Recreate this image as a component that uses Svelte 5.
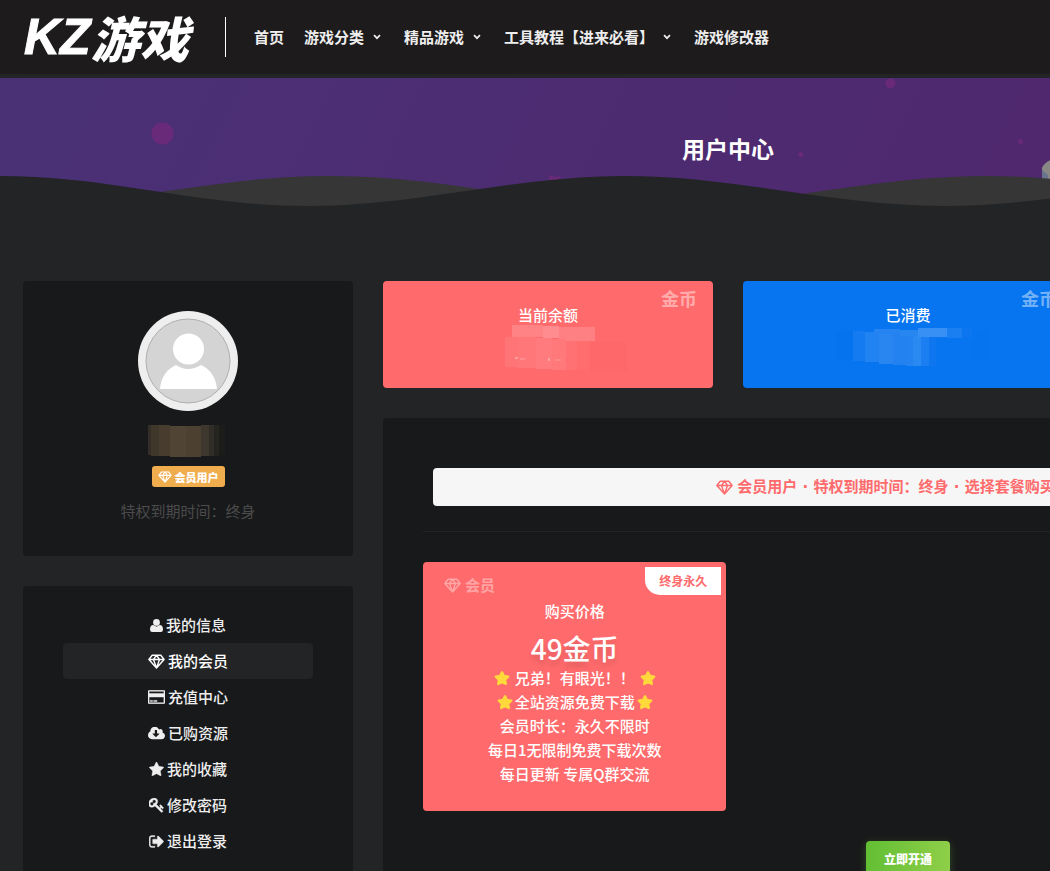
<script>
  const icons = {
    user: { box: '0 0 13 13', w: 13, h: 13, d: 'M6.5 0a3.4 3.4 0 0 1 0 6.8a3.4 3.4 0 0 1 0-6.8zM0 10.5C0 8 1 6 3.3 6Q4.8 7.4 6.5 7.4T9.7 6C12 6 13 8 13 10.5Q13 13 10.8 13H2.2Q0 13 0 10.5z' },
    diamond: { box: '0 0 17 15', w: 17, h: 15, line: 1.4, d: 'M4.2 1.2h8.6l3.3 4.3L8.500 14L.9 5.500zM.9 5.500h15.200M8.500 1.200L5.500 5.500L8.500 14L11.500 5.500z' },
    card: { box: '0 128 1920 1536', w: 17, h: 14, edge: 50, d: 'M1760 128q66 0 113 47t47 113v1216q0 66-47 113t-113 47h-1600q-66 0-113-47t-47-113v-1216q0-66 47-113t113-47h1600zm-1600 128q-13 0-22.5 9.5t-9.5 22.5v224h1664v-224q0-13-9.5-22.5t-22.5-9.5h-1600zm1600 1280q13 0 22.5-9.5t9.5-22.5v-608h-1664v608q0 13 9.5 22.5t22.5 9.5h1600zm-1504-128v-128h256v128h-256zm384 0v-128h384v128h-384z' },
    cloud: { box: '-64 192 1920 1408', w: 17, h: 13, d: 'M1216 928q0-14-9-23t-23-9h-224v-352q0-13-9.5-22.5t-22.5-9.5h-192q-13 0-22.5 9.5t-9.5 22.5v352h-224q-13 0-22.5 9.5t-9.5 22.5q0 14 9 23l352 352q9 9 23 9t23-9l351-351q10-12 10-24zm640 224q0 159-112.5 271.5t-271.5 112.5h-1088q-185 0-316.5-131.5t-131.5-316.5q0-130 70-240t188-165q-2-30-2-43 0-212 150-362t362-150q156 0 285.5 87t188.5 231q71-62 166-62 106 0 181 75t75 181q0 76-41 138 130 31 213.5 135.5t83.5 238.5z' },
    star: { box: '64 32 1664 1600', w: 15, h: 14, edge: 40, d: 'M1728 647q0 22-26 48l-363 354 86 500q1 7 1 20 0 21-10.5 35.5t-30.5 14.5q-19 0-40-12l-449-236-449 236q-22 12-40 12-21 0-31.5-14.5t-10.5-35.5q0-6 2-20l86-500-364-354q-25-27-25-48 0-37 56-46l502-73 225-455q19-41 49-41t49 41l225 455 502 73q56 9 56 46z' },
    key: { box: '64 128 1664 1664', w: 15, h: 15, edge: 50, d: 'M832 512q0-80-56-136t-136-56-136 56-56 136q0 42 19 83-41-19-83-19-80 0-136 56t-56 136 56 136 136 56 136-56 56-136q0-42-19-83 41 19 83 19 80 0 136-56t56-136zm851 704q0 17-49 66t-66 49q-9 0-28.5-16t-36.5-33-38.5-40-24.5-26l-96 96 220 220q28 28 28 68 0 42-39 81t-81 39q-40 0-68-28l-671-671q-176 131-365 131-163 0-265.5-102.5t-102.5-265.5q0-160 95-313t248-248 313-95q163 0 265.5 102.5t102.5 265.5q0 189-131 365l355 355 96-96q-3-3-26-24.5t-40-38.5-33-36.5-16-28.5q0-17 49-66t66-49q13 0 23 10 6 6 46 44.5t82 79.5 86.5 86 73 78 28.5 41z' },
    exit: { box: '64 192 1600 1408', w: 15, h: 13, edge: 40, d: 'M704 1440q0 4 1 20t.5 26.5-3 23.5-10 19.5-20.5 6.5h-320q-119 0-203.5-84.5t-84.5-203.5v-704q0-119 84.5-203.5t203.5-84.5h320q13 0 22.5 9.5t9.5 22.5q0 4 1 20t.5 26.5-3 23.5-10 19.5-20.5 6.5h-320q-66 0-113 47t-47 113v704q0 66 47 113t113 47h312l11.5 1 11.5 3 8 5.5 7 9 2 13.5zm928-544q0 26-19 45l-544 544q-19 19-45 19t-45-19-19-45v-288h-448q-26 0-45-19t-19-45v-384q0-26 19-45t45-19h448v-288q0-26 19-45t45-19 45 19l544 544q19 19 19 45z' }
  };

  const nav = [
    { label: '首页' },
    { label: '游戏分类', sub: true },
    { label: '精品游戏', sub: true },
    { label: '工具教程【进来必看】', sub: true },
    { label: '游戏修改器' }
  ];

  const menu = [
    { icon: 'user', label: '我的信息' },
    { icon: 'diamond', label: '我的会员', active: true },
    { icon: 'card', label: '充值中心' },
    { icon: 'cloud', label: '已购资源' },
    { icon: 'star', label: '我的收藏' },
    { icon: 'key', label: '修改密码' },
    { icon: 'exit', label: '退出登录' }
  ];

  // Mosaic tiles: x, y, width, height, fill
  const nameTiles = [
    [0, 0, 3, 30, '#352e28'], [3, 0, 8, 31, '#40372b'], [11, 0, 11, 31, '#473c2e'],
    [22, 1, 16, 31, '#504434'], [38, 1, 15, 31, '#4c4031'], [53, 0, 8, 31, '#3e372e'],
    [61, 0, 5, 31, '#302c27'], [66, 0, 5, 31, '#26241f'], [71, 0, 6, 30, '#1c1c1a']
  ];
  const balanceTiles = [
    [7, 0, 31, 12, '#ff8284'], [38, 1, 16, 12, '#ff8c8f'], [54, 2, 36, 14, '#ff8083'],
    [0, 12, 13, 30, '#ff7476'], [13, 12, 18, 31, '#ff7779'], [31, 13, 16, 31, '#ff7b7d'],
    [47, 14, 14, 31, '#ff797b'], [61, 16, 11, 29, '#ff7173'], [72, 16, 13, 29, '#ff6d6f'],
    [85, 17, 37, 29, '#ff686b'],
    [10, 32, 3, 2, '#ff9c9e'], [15, 33, 5, 2, '#ff8c8f'], [43, 33, 2, 3, '#ffa0a2'], [50, 34, 6, 2, '#ff898b']
  ];
  const spentTiles = [
    [0, 6, 17, 29, '#0573ee'], [17, 6, 12, 30, '#147bf1'], [29, 7, 14, 30, '#2183f1'],
    [38, 4, 26, 6, '#2584f1'], [43, 9, 14, 30, '#2986f1'], [57, 10, 13, 30, '#2382f0'],
    [70, 10, 7, 31, '#2483f1'], [77, 10, 8, 31, '#2b89f2'], [85, 11, 8, 30, '#1c7ff1'],
    [93, 11, 7, 30, '#0e77ef'], [64, 5, 18, 6, '#2886f1'], [82, 3, 29, 9, '#3990f4'],
    [111, 3, 15, 10, '#1a80f2'], [126, 3, 10, 10, '#0b76ef'], [136, 6, 17, 28, '#0674ef']
  ];
</script>

{#snippet icon(name)}
  {@const i = icons[name]}
  <svg class="icon" width={i.w} height={i.h} viewBox={i.box} aria-hidden="true">
    {#if i.line}
      <path d={i.d} fill="none" stroke="currentColor" stroke-width={i.line} stroke-linejoin="round" />
    {:else}
      <path d={i.d} fill="currentColor" stroke="currentColor" stroke-width={i.edge ?? 0} />
    {/if}
  </svg>
{/snippet}

{#snippet mosaic(tiles, w, h)}
  <svg class="mosaic" width={w} height={h} viewBox="0 0 {w} {h}" shape-rendering="crispEdges" aria-hidden="true">
    {#each tiles as [x, y, tw, th, fill]}
      <rect {x} {y} width={tw} height={th} {fill} />
    {/each}
  </svg>
{/snippet}

{#snippet goldStar()}
  <svg class="gold" width="16" height="16" viewBox="0 0 16 16" aria-hidden="true">
    <path d="M8 2.200l1.900 3.800 4.300.6-3.100 3 .7 4.300L8 12l-3.800 1.900.7-4.300-3.100-3 4.300-.6z" fill="#ffd83b" stroke="#ffd83b" stroke-width="2.400" stroke-linejoin="round" />
  </svg>
{/snippet}

<div class="page">
  <header>
    <a class="logo" href="#home"><span>KZ</span>游戏</a>
    <nav>
      {#each nav as item}
        <a href="#nav">
          {item.label}
          {#if item.sub}
            <svg class="chev" width="8" height="6" viewBox="0 0 8 6" aria-hidden="true"><path d="M1 1.200l3 3 3-3" fill="none" stroke="currentColor" stroke-width="1.700" /></svg>
          {/if}
        </a>
      {/each}
    </nav>
  </header>

  <section class="hero">
    <svg class="scene" width="1456" height="128" viewBox="0 0 1456 128" aria-hidden="true">
      <g fill="#6a2a7a">
        <circle cx="162.500" cy="55.500" r="11" />
        <circle cx="890.500" cy="5.500" r="5" />
        <circle cx="801" cy="76.500" r="2.500" />
        <circle cx="1020.500" cy="63.500" r="2.500" />
        <path d="M549 97l6 2 6-1-4 6h-8z" />
      </g>
      <path d="M1042 90q3-7 12-9v22h-12z" fill="#888887" />
      <path d="M1042 92l6 5v8h-6z" fill="#68738e" />
      <path d="M4 128C122 128 212 98 330 98S540 128 658 128S869 98 987 98S1197 128 1315 128z" fill="#363636" />
      <path d="M0 98C112 98 196 128 308 128S513 98 625 98S833 128 945 128S1153 98 1265 98S1400 110 1456 120V128H0z" fill="#232426" />
    </svg>
    <h1>用户中心</h1>
  </section>

  <main>
    <aside>
      <section class="panel profile">
        <svg class="avatar" width="100" height="100" viewBox="0 0 100 100" role="img" aria-label="头像">
          <circle cx="50" cy="50" r="50" fill="#eee" />
          <circle cx="50" cy="50" r="42" fill="#d4d4d4" stroke="#999" stroke-width=".7" />
          <circle cx="50.500" cy="38" r="15.500" fill="#fff" />
          <path d="M22 78C23 66 29 58 38 54Q50 62 63 54C72 58 78 66 79 78z" fill="#fff" />
        </svg>
        {@render mosaic(nameTiles, 80, 32)}
        <span class="badge">{@render icon('diamond')}会员用户</span>
        <p>特权到期时间：终身</p>
      </section>

      <nav class="panel menu">
        {#each menu as item}
          <a href="#menu" class:active={item.active}>{@render icon(item.icon)}{item.label}</a>
        {/each}
      </nav>
    </aside>

    <div class="content">
      <div class="stats">
        <section class="stat red">
          <span class="unit">金币</span>
          <h2>当前余额</h2>
          {@render mosaic(balanceTiles, 122, 46)}
        </section>
        <section class="stat blue">
          <span class="unit">金币</span>
          <h2>已消费</h2>
          {@render mosaic(spentTiles, 153, 46)}
        </section>
      </div>

      <section class="panel plans">
        <div class="notice">{@render icon('diamond')}会员用户 · 特权到期时间：终身 · 选择套餐购买或续费</div>
        <hr />
        <div class="grid">
          <article class="plan">
            <span class="tier">{@render icon('diamond')}会员</span>
            <span class="term">终身永久</span>
            <h3>购买价格</h3>
            <strong>49金币</strong>
            <ul>
              <li class="wide">{@render goldStar()}<span>兄弟！有眼光！！</span>{@render goldStar()}</li>
              <li>{@render goldStar()}<span>全站资源免费下载</span>{@render goldStar()}</li>
              <li>会员时长：永久不限时</li>
              <li>每日1无限制免费下载次数</li>
              <li>每日更新 专属Q群交流</li>
            </ul>
          </article>
        </div>
        <button type="button">立即开通</button>
      </section>
    </div>
  </main>
</div>

<style>
  :global(body) {
    margin: 0;
    background: #232426;
    overflow-x: hidden;
  }
  .page {
    min-width: 1456px;
    font-family: "Noto Sans CJK SC", sans-serif;
    font-size: 15px;
    line-height: 24px;
    color: #fff;
  }
  a { color: inherit; text-decoration: none; }
  h1, h2, h3, p, ul { margin: 0; padding: 0; }
  svg { display: block; flex: none; }

  header {
    display: flex;
    align-items: center;
    box-sizing: border-box;
    height: 78px;
    padding: 0 24px;
    background: #1d1b1c;
    border-bottom: 4px solid #232426;
  }
  .logo {
    display: flex;
    align-items: center;
    width: 201px;
    height: 40px;
    border-right: 1px solid #fff;
    font-size: 49px;
    line-height: 36px;
    font-weight: 900;
    font-style: italic;
    white-space: nowrap;
  }
  .logo span {
    font-family: "Liberation Sans", sans-serif;
    font-size: 50px;
    line-height: 40px;
    font-weight: 700;
    -webkit-text-stroke: 1px #fff;
  }
  header nav {
    display: flex;
    padding-left: 18px;
    font-weight: 700;
    color: #eee;
  }
  header nav a {
    display: flex;
    align-items: center;
    padding: 0 10px;
  }
  .chev { margin: 0 3px 0 9px; }

  .hero {
    position: relative;
    display: flex;
    justify-content: center;
    height: 128px;
    background: linear-gradient(115deg, #4a3176, #4f286e 70%, #52266b);
  }
  .scene {
    position: absolute;
    inset: 0;
    width: 100%;
  }
  h1 {
    position: relative;
    padding-top: 54px;
    font-size: 23px;
    line-height: 32px;
    font-weight: 700;
  }

  main {
    display: grid;
    grid-template-columns: 330px 1fr;
    gap: 30px;
    max-width: 1410px;
    margin: 0 auto;
    padding: 75px 23px 40px;
  }
  .panel {
    background: #18191b;
    border-radius: 4px;
  }
  .profile {
    display: flex;
    flex-direction: column;
    align-items: center;
    padding: 30px 0 33px;
    margin-bottom: 30px;
  }
  .profile .mosaic { margin: 14px 0 9px; }
  .badge {
    display: flex;
    align-items: center;
    box-sizing: border-box;
    gap: 3px;
    height: 21px;
    padding: 0 6px;
    border-radius: 3px;
    background: #f0ad4e;
    font-size: 11px;
    line-height: 20px;
    font-weight: 900;
  }
  .badge .icon { width: 14px; height: 12px; }
  .profile p {
    margin-top: 12px;
    color: #4b4b4b;
  }

  .menu { padding: 21px 40px 40px; }
  .menu a {
    display: flex;
    align-items: center;
    justify-content: center;
    gap: 3px;
    height: 36px;
    border-radius: 4px;
    font-weight: 500;
    color: #eee;
  }
  .menu a.active { background: #232426; color: #fff; }

  .stats {
    display: grid;
    grid-template-columns: repeat(3, 1fr);
    gap: 30px;
    margin-bottom: 30px;
  }
  .stat {
    position: relative;
    display: flex;
    flex-direction: column;
    align-items: center;
    box-sizing: border-box;
    height: 107px;
    padding-top: 22px;
    border-radius: 4px;
  }
  .stat .mosaic { margin-top: -2px; }
  .red .mosaic { margin-left: 36px; }
  .blue .mosaic { margin-left: 8px; }
  .red { background: #ff6b6c; }
  .blue { background: #0775f0; }
  .unit {
    position: absolute;
    top: 5px;
    right: 16px;
    font-size: 18px;
    font-weight: 700;
    color: rgba(255, 255, 255, 0.45);
  }
  h2, h3 { font-size: 15px; font-weight: 500; }

  .plans { padding: 50px 40px; }
  .notice {
    display: flex;
    align-items: center;
    justify-content: center;
    gap: 4px;
    height: 38px;
    margin: 0 10px;
    border-radius: 4px;
    background: #f6f6f6;
    color: #ff6b6c;
    font-family: "DejaVu Sans", "Noto Sans CJK SC", sans-serif;
    font-weight: 700;
  }
  hr {
    margin: 25px 0 30px;
    border: 0;
    border-top: 1px solid #232426;
  }
  .grid {
    display: grid;
    grid-template-columns: repeat(3, 1fr);
    gap: 30px;
  }
  .plan {
    position: relative;
    padding: 37px 0 25px;
    border-radius: 4px;
    background: #ff6b6c;
    text-align: center;
    font-weight: 500;
  }
  .tier {
    position: absolute;
    top: 11px;
    left: 21px;
    display: flex;
    align-items: center;
    gap: 4px;
    font-weight: 700;
    color: rgba(255, 255, 255, 0.4);
  }
  .term {
    position: absolute;
    top: 5px;
    right: 5px;
    padding: 0 14px;
    border-bottom-left-radius: 15px;
    background: #fff;
    color: #ff6b6c;
    font-size: 12px;
    line-height: 28px;
    font-weight: 700;
  }
  .plan strong {
    display: block;
    padding-top: 7px;
    font-size: 28px;
    line-height: 36px;
    font-weight: 500;
    text-shadow: 0 5px 5px rgba(0, 0, 0, 0.12);
  }
  .plan ul { list-style: none; }
  .plan li {
    display: flex;
    align-items: center;
    justify-content: center;
    gap: 2px;
    height: 24px;
    white-space: pre;
  }
  .plan li.wide { gap: 5px; }
  button {
    display: block;
    margin: 30px auto 0;
    padding: 0 18px;
    border: 0;
    border-radius: 4px;
    background: linear-gradient(90deg, #62bf34, #8fce48);
    box-shadow: 0 2px 8px rgba(115, 196, 60, 0.3);
    color: #fff;
    font-family: inherit;
    font-size: 12px;
    line-height: 36px;
    font-weight: 900;
  }
</style>
